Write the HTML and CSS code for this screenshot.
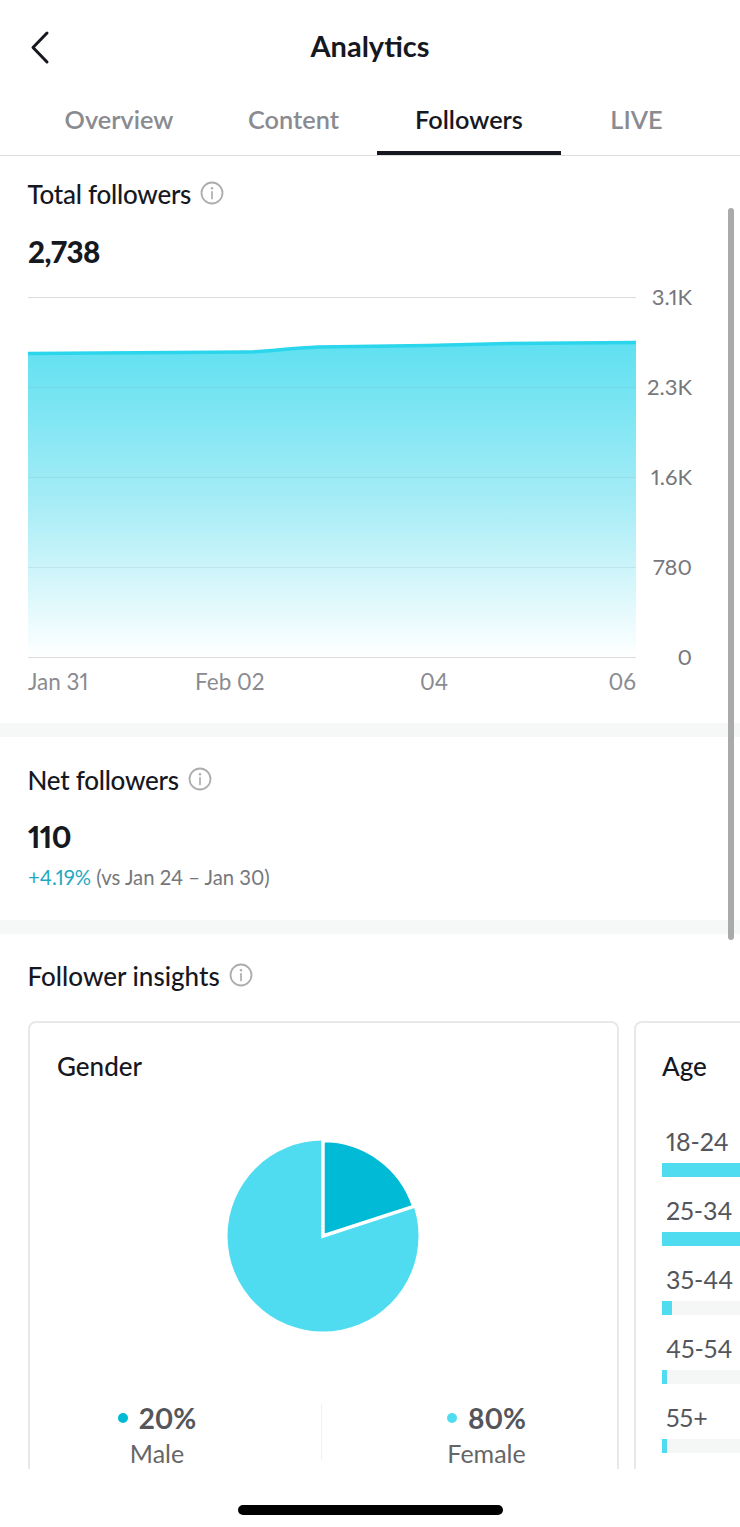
FILE: index.html
```html
<!DOCTYPE html>
<html lang="en">
<head>
<meta charset="utf-8">
<title>Analytics</title>
<link rel="stylesheet" href="styles.css">
</head>
<body>
<div class="screen">
  <main class="content">
    <header class="topbar">
      <svg class="back" viewBox="0 0 24 36" width="24" height="36"><path d="M19 3 L5 17.500 L19 32" fill="none" stroke="#16181f" stroke-width="3" stroke-linecap="round" stroke-linejoin="round"/></svg>
      <h1 class="page-title">Analytics</h1>
    </header>
    <nav class="tabs">
      <a class="tab tab-overview">Overview</a>
      <a class="tab tab-content">Content</a>
      <a class="tab tab-followers active">Followers</a>
      <a class="tab tab-live">LIVE</a>
    </nav>

    <section class="panel panel-total">
      <div class="heading tight"><h2>Total followers</h2>
        <svg class="info" viewBox="0 0 24 24"><circle cx="12" cy="12" r="10.500" fill="none" stroke="#adadaf" stroke-width="1.800"/><circle cx="12" cy="7.300" r="1.200" fill="#adadaf"/><path d="M12 10.800V17.500" stroke="#adadaf" stroke-width="1.700" stroke-linecap="round"/></svg>
      </div>
      <div class="value">2,738</div>
      <div class="chart">
        <svg class="plot" viewBox="0 0 608 362" width="608" height="362">
          <defs><linearGradient id="fade" x1="0" y1="0" x2="0" y2="1"><stop offset="0" stop-color="#5fe0f1"/><stop offset="0.5" stop-color="#a5ecf6"/><stop offset="1" stop-color="#ffffff"/></linearGradient></defs>
          <path d="M0 56.500 L220 55 C240 54.500 260 51.500 290 50 L400 48.500 L480 46.500 L608 45.500 V360 H0 Z" fill="url(#fade)"/>
          <path d="M0 56.500 L220 55 C240 54.500 260 51.500 290 50 L400 48.500 L480 46.500 L608 45.500" fill="none" stroke="#2bd5ec" stroke-width="3.500"/>
          <g stroke-width="1">
            <path d="M0 0.500H608" stroke="#dcdcdc"/>
            <path d="M0 90.500H608 M0 180.500H608 M0 270.500H608" stroke="#7a9aa5" stroke-opacity="0.160"/>
            <path d="M0 360.500H608" stroke="#dcdcdc"/>
          </g>
        </svg>
        <div class="y-axis"><span>3.1K</span><span>2.3K</span><span>1.6K</span><span>780</span><span>0</span></div>
        <div class="x-axis"><span class="x1">Jan 31</span><span class="x2">Feb 02</span><span class="x3">04</span><span class="x4">06</span></div>
      </div>
    </section>

    <section class="panel panel-net">
      <div class="heading tight"><h2>Net followers</h2>
        <svg class="info" viewBox="0 0 24 24"><circle cx="12" cy="12" r="10.500" fill="none" stroke="#adadaf" stroke-width="1.800"/><circle cx="12" cy="7.300" r="1.200" fill="#adadaf"/><path d="M12 10.800V17.500" stroke="#adadaf" stroke-width="1.700" stroke-linecap="round"/></svg>
      </div>
      <div class="value">110</div>
      <p class="delta"><span class="up">+4.19%</span> (vs Jan 24 – Jan 30)</p>
    </section>

    <section class="panel panel-insights">
      <div class="heading"><h2>Follower insights</h2>
        <svg class="info" viewBox="0 0 24 24"><circle cx="12" cy="12" r="10.500" fill="none" stroke="#adadaf" stroke-width="1.800"/><circle cx="12" cy="7.300" r="1.200" fill="#adadaf"/><path d="M12 10.800V17.500" stroke="#adadaf" stroke-width="1.700" stroke-linecap="round"/></svg>
      </div>
      <div class="cards">
        <article class="card gender">
          <h3>Gender</h3>
          <svg class="pie" viewBox="0 0 192 192" width="192" height="192">
            <circle cx="96" cy="96" r="95.500" fill="#4fdcf1"/>
            <path d="M96 96 V0.500 A95.500 95.500 0 0 1 186.800 66.500 Z" fill="#00bad6" stroke="#fff" stroke-width="3.500" stroke-linejoin="miter"/>
          </svg>
          <div class="split">
            <div class="stat stat-male"><div class="pct"><i class="dot dark"></i>20%</div><div class="lbl">Male</div></div>
            <div class="stat stat-female"><div class="pct"><i class="dot light"></i>80%</div><div class="lbl">Female</div></div>
          </div>
        </article>
        <article class="card age">
          <h3>Age</h3>
          <div class="rows">
            <div class="row"><span>18-24</span><div class="track"><div class="fill" style="width:45%"></div></div></div>
            <div class="row"><span>25-34</span><div class="track"><div class="fill" style="width:38%"></div></div></div>
            <div class="row"><span>35-44</span><div class="track"><div class="fill" style="width:10px"></div></div></div>
            <div class="row"><span>45-54</span><div class="track"><div class="fill" style="width:5px"></div></div></div>
            <div class="row"><span>55+</span><div class="track"><div class="fill" style="width:5px"></div></div></div>
          </div>
        </article>
      </div>
    </section>
    <div class="scrollbar"></div>
  </main>
  <div class="home"><div class="home-bar"></div></div>
</div>
</body>
</html>
```

FILE: styles.css
```css
* { box-sizing: border-box; }
html, body { margin: 0; padding: 0; background: #fff; }
body { font-family: "Lato", "Liberation Sans", sans-serif; color: #16181f; font-variant-numeric: proportional-nums; }
.screen { width: 740px; height: 1527px; overflow: hidden; display: flex; flex-direction: column; }
.content { position: relative; height: 1469px; overflow: hidden; }

.topbar { height: 92px; position: relative; display: flex; justify-content: center; padding-top: 28px; }
.back { position: absolute; left: 28px; top: 30px; }
.page-title { margin: 0; font-size: 29px; line-height: 36px; font-weight: 700; }

.tabs { display: flex; height: 64px; padding-left: 28px; border-bottom: 1px solid #dedede; }
.tab { height: 63px; padding: 10px 0 0; text-align: center; font-size: 25.3px; line-height: 35px; font-weight: 600; color: #8a8b90; }
.tab-overview { width: 182px; }
.tab-content { width: 167px; }
.tab-followers { width: 184px; color: #16181f; border-bottom: 4px solid #16181f; }
.tab-live { width: 151px; }

.panel { padding: 0 28px; background: #fff; }
.panel-total { padding-top: 20px; height: 581px; border-bottom: 14px solid #f6f8f8; }
.panel-net { padding-top: 25px; height: 197px; border-bottom: 14px solid #f6f8f8; }
.panel-insights { padding: 24px 0 0 28px; }

.heading { display: flex; align-items: center; gap: 9px; height: 36px; margin-left: -0.5px; }
.heading h2 { margin: 0; font-size: 26px; line-height: 36px; font-weight: 500; }
.heading.tight h2 { letter-spacing: -0.25px; }
.info { width: 24px; height: 24px; margin-top: -2px; }
.value { margin-top: 21px; font-size: 29.5px; line-height: 36px; font-weight: 900; letter-spacing: -0.5px; }
.panel-total .value { margin-top: 22px; }

.chart { display: grid; grid-template-columns: 608px 56px; grid-template-rows: 362px auto; margin-top: 27px; }
.plot { display: block; }
.y-axis { margin-top: -15px; height: 390px; display: flex; flex-direction: column; justify-content: space-between; align-items: flex-end; font-size: 22px; line-height: 30px; color: #76777b; }
.x-axis { grid-column: 1; display: flex; margin-top: 8px; font-size: 22.5px; line-height: 30px; color: #8a8b90; }
.x1 { width: 167px; }
.x2 { width: 225px; }
.x3 { flex: 1; }

.delta { margin: 7px 0 0; font-size: 20.3px; line-height: 30px; color: #76777b; }
.up { color: #1fa9bf; }

.cards { display: flex; gap: 15px; margin-top: 27px; }
.card { flex: 0 0 591px; height: 600px; border: 2px solid #e8e8e8; border-radius: 8px; padding: 25px 0 0 27px; }
.card h3 { margin: 0; font-size: 26px; line-height: 36px; font-weight: 500; }
.pie { display: block; margin: 56px 0 0 170px; }
.split { display: flex; width: 587px; margin: 72px 0 0 -27px; }
.stat { height: 56px; text-align: center; }
.stat-male { width: 291px; padding-right: 37px; }
.stat-female { width: 296px; padding-left: 34px; border-left: 1px solid #f0f0f0; }
.pct { display: flex; align-items: center; justify-content: center; gap: 11px; font-size: 28px; line-height: 28px; font-weight: 700; color: #54565b; }
.lbl { margin-top: 5px; font-size: 25px; line-height: 32px; color: #666; }
.dot { width: 10px; height: 10px; border-radius: 50%; }
.dot.dark { background: #00bad6; }
.dot.light { background: #4fdcf1; }

.card.age { padding-left: 26px; }
.rows { display: flex; flex-direction: column; gap: 15px; margin-top: 39px; }
.row { height: 54px; }
.row span { display: block; height: 40px; padding: 0 0 0 4px; font-size: 25px; line-height: 36px; color: #54565b; }
.track { height: 14px; width: 540px; background: #f5f6f6; }
.fill { height: 14px; background: #4fdcf1; }

.scrollbar { position: absolute; left: 728px; top: 208px; width: 6px; height: 732px; border-radius: 3px; background: #aaaaaa; }

.home { height: 58px; padding-top: 36px; display: flex; justify-content: center; }
.home-bar { width: 265px; height: 10px; border-radius: 5px; background: #000; }
```
